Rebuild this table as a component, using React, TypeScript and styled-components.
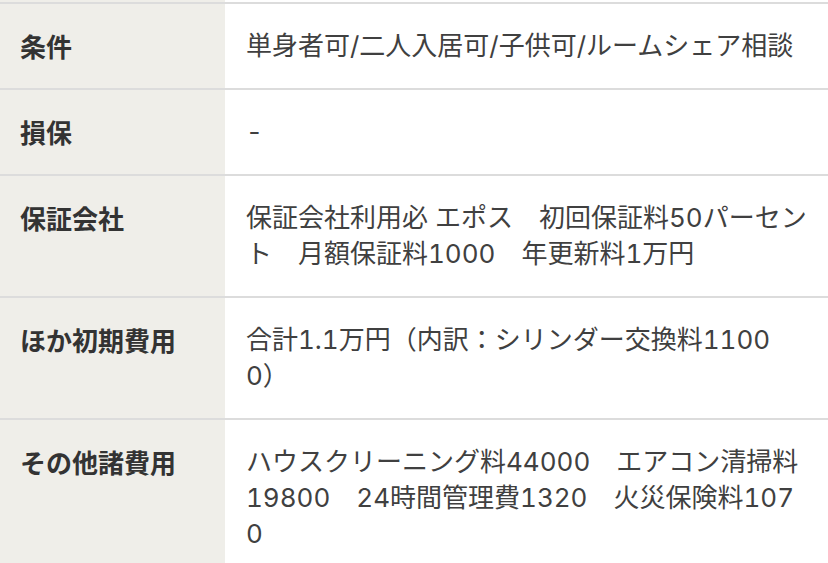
import React from 'react';
import styled, { createGlobalStyle } from 'styled-components';

const GlobalStyle = createGlobalStyle`
  html, body {
    margin: 0;
    padding: 0;
    background: #ffffff;
  }
  body {
    font-family: "Noto Sans CJK JP", "Noto Sans", sans-serif;
    -webkit-font-smoothing: antialiased;
  }
`;

const Table = styled.div`
  width: 828px;
  height: 563px;
  overflow: hidden;
  display: flex;
  flex-direction: column;
`;

const Row = styled.div<{ $peek?: boolean }>`
  display: grid;
  grid-template-columns: 225px 1fr;
  border-bottom: 2px solid #dcdcdc;
  flex-shrink: 0;
  height: ${(p) => (p.$peek ? '2px' : 'auto')};
  overflow: hidden;
`;

const Label = styled.div<{ $empty?: boolean }>`
  background: #efeee9;
  color: #333333;
  font-size: 26px;
  font-weight: 700;
  line-height: 36px;
  padding: ${(p) => (p.$empty ? '0' : '24px 20px')};
`;

const Value = styled.div<{ $empty?: boolean }>`
  background: #ffffff;
  color: #404040;
  font-family: Inter, "Noto Sans CJK JP", sans-serif;
  font-variant-numeric: tabular-nums;
  font-size: 26px;
  font-weight: 400;
  line-height: 36px;
  padding: ${(p) => (p.$empty ? '0' : '24px 22px 24px 21px')};
`;

// 折り返し位置は元画面に合わせて行ごとに持つ
const Line = styled.span`
  display: block;
  white-space: nowrap;
`;

const rows = [
  { label: '条件', lines: ['単身者可/二人入居可/子供可/ルームシェア相談'] },
  { label: '損保', lines: ['-'] },
  {
    label: '保証会社',
    lines: ['保証会社利用必 エポス　初回保証料50パーセン', 'ト　月額保証料1000　年更新料1万円'],
  },
  { label: 'ほか初期費用', lines: ['合計1.1万円（内訳：シリンダー交換料1100', '0）'] },
  {
    label: 'その他諸費用',
    lines: ['ハウスクリーニング料44000　エアコン清掃料', '19800　24時間管理費1320　火災保険料107', '0'],
  },
];

export default function App() {
  return (
    <>
      <GlobalStyle />
      <Table>
        <Row $peek>
          <Label $empty />
          <Value $empty />
        </Row>
        {rows.map((r) => (
          <Row key={r.label}>
            <Label>{r.label}</Label>
            <Value>
              {r.lines.map((l, i) => (
                <Line key={i}>{l}</Line>
              ))}
            </Value>
          </Row>
        ))}
      </Table>
    </>
  );
}
